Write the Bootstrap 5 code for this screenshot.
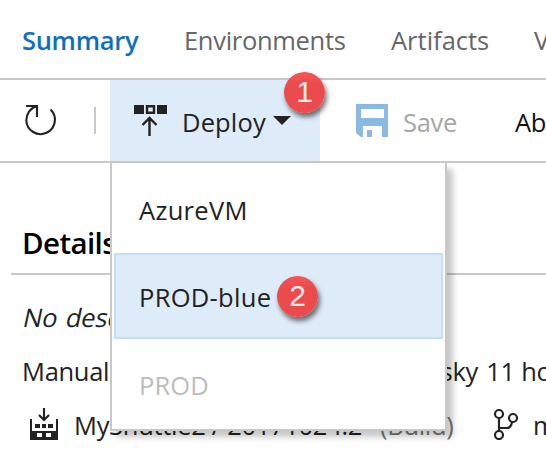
<!DOCTYPE html>
<html lang="en">
<head>
<meta charset="utf-8">
<title>Release summary</title>
<link href="https://cdn.jsdelivr.net/npm/bootstrap@5.3.0/dist/css/bootstrap.min.css" rel="stylesheet">
<style>
body{width:546px;height:457px;overflow:hidden;background:#fff;color:#222;font:25.5px/36px "Open Sans","Noto Sans",sans-serif;letter-spacing:-.3px}
svg{display:block;flex:none}
.tabs-bar{height:80px;border-bottom:2px solid #c8c8c8;padding:2px 0 0 22px;overflow:hidden}
.tabs-bar .nav-link{padding:0;color:#666;flex:none}
.tabs-bar .nav-link.active{color:#106ebe;font-weight:600}
.t-sum{width:162px}.t-env{width:207px}.t-art{width:143px;letter-spacing:0}
.tool-bar{height:83px;border-bottom:2px solid #c8c8c8}
.tool-bar > *,.build > *{flex:none}
.tool-bar .icon-refresh{margin-left:24px}
.sep{width:2px;height:27px;background:#c8c8c8;margin-left:36px}
.deploy-btn{width:210px;height:81px;background:#deebf8;margin-left:14px;padding-left:24px}
.deploy-btn .lbl{width:91px;margin-left:14px;padding-top:3px;letter-spacing:.15px}
.deploy-btn .lbl,.deploy-btn svg{flex:none}
.save-btn{margin-left:36px;color:#a6a6a6}
.save-btn .lbl{width:112px;margin-left:15px;padding-top:3px}
.abandon{color:#111;padding-top:3px}
.drop-menu{left:110px;top:83px;width:337px;height:268px;border:2px solid #c8c8c8;border-top:0;background:#fff;padding:0 2px;box-shadow:6px 6px 6px rgba(0,0,0,.22);clip-path:inset(0 -20px -20px 0);z-index:5;letter-spacing:.3px}
.menu-row{height:90px;padding:3px 0 0 25px}
.menu-row.picked{height:86px;background:#deebf8;border:2px solid #c7dff5;padding:2px 0 0 23px}
.menu-row.off{color:#bdbdbd;padding-top:1px;letter-spacing:.1px}
.step{width:41px;height:41px;border-radius:50%;background:linear-gradient(#f55555,#ec4b4d 30%,#ec4b4d);color:#f4e9ea;font:30px/40px "Liberation Sans",sans-serif;letter-spacing:0;text-align:center;box-shadow:2px 4px 5px rgba(0,0,0,.55);z-index:6}
.step-1{left:284px;top:-8px}
.step-2{left:161px;top:21px}
.details h2{font-size:29.5px;line-height:40px;font-weight:600;color:#000;letter-spacing:-.6px;margin:60px 0 0 22px}
.rule{height:2px;background:#c8c8c8;margin:10px 0 0 11px}
.desc{margin:24px 0 0 24px;width:300px;letter-spacing:-.2px;word-spacing:2px;transform:skewX(-12deg)}
.manual{margin:18px 0 0 22px}
.manual .by{width:456px}
.ago{margin-left:2px}
.build{margin:15px 0 0 30px}
.build .rel{width:306px;margin-left:16px}
.build .kind{width:113px;color:#777}
.build .rel,.build .kind,.build .branch{padding-top:3px}
.build .branch{margin-left:14px}
</style>
</head>
<body>
<nav class="nav tabs-bar d-flex flex-nowrap align-items-center text-nowrap">
  <a class="nav-link active t-sum">Summary</a><a class="nav-link t-env">Environments</a><a class="nav-link t-art">Artifacts</a><a class="nav-link">V</a>
</nav>
<div class="tool-bar position-relative d-flex align-items-center text-nowrap">
  <svg class="icon-refresh" width="34" height="34" viewBox="0 0 34 34" fill="none" stroke="#222" stroke-width="2.1"><path d="M13 2C6 4 2.300 10 2.300 16.500A14.300 14.300 0 1 0 26.500 5.500M2 2h11v11"/></svg>
  <div class="sep"></div>
  <div class="deploy-btn d-flex align-items-center">
    <svg width="34" height="34" viewBox="0 0 34 34" fill="#222"><path d="M0 1h10v9H0zM23 1h10v9H23z"/><path d="M13 2.200h7v6.600h-7zM15.500 32V14M8.500 21l7-7 7 7" fill="none" stroke="#222" stroke-width="2.4"/></svg>
    <span class="lbl">Deploy</span>
    <svg width="18" height="10" viewBox="0 0 18 10" fill="#222"><path d="M0 0h18L9 9z"/></svg>
  </div>
  <div class="save-btn d-flex align-items-center">
    <svg width="32" height="33" viewBox="0 0 32 33" fill="#8ab9e3"><path fill-rule="evenodd" d="M0 0h32v33h-6V22H7v11H5l-5-4zM5 5v9h23V5z"/><path d="M11 26h5v7h-5z"/></svg>
    <span class="lbl">Save</span>
  </div>
  <span class="abandon">Ab</span>
  <div class="step step-1 position-absolute">1</div>
  <div class="drop-menu position-absolute">
    <div class="menu-row d-flex align-items-center">AzureVM</div>
    <div class="menu-row picked d-flex align-items-center position-relative">PROD-blue
      <div class="step step-2 position-absolute">2</div>
    </div>
    <div class="menu-row off d-flex align-items-center">PROD</div>
  </div>
</div>
<main class="details text-nowrap overflow-hidden">
  <h2>Details</h2>
  <div class="rule"></div>
  <div class="desc">No description</div>
  <div class="manual d-flex"><span class="by d-flex flex-shrink-0 justify-content-between"><span>Manual</span><span>sky</span></span><span class="ago flex-shrink-0">&nbsp;11 ho</span></div>
  <div class="build d-flex align-items-center">
    <svg width="28" height="33" viewBox="0 0 28 33" fill="#222"><path d="M0 12h2v12h24V12h2v21H0zM5 17h5v4H5zM12 17h4v4h-4zM18 17h5v4h-5z"/><path fill="#fff" d="M7 26h5v4H7zM16 26h5v4h-5z"/><path d="M14 1v12M9 8l5 5 5-5" fill="none" stroke="#222" stroke-width="2.1"/></svg>
    <span class="rel">MyShuttle2 / 20171024.2</span><span class="kind">(Build)</span>
    <svg width="26" height="32" viewBox="0 0 26 32" fill="none" stroke="#222" stroke-width="2.2"><circle cx="6" cy="6" r="4"/><circle cx="20" cy="10" r="4"/><circle cx="6" cy="27" r="4"/><path d="M6 10v13M6 20h8q4 0 5-6"/></svg>
    <span class="branch">m</span>
  </div>
</main>
<script src="https://cdn.jsdelivr.net/npm/bootstrap@5.3.0/dist/js/bootstrap.bundle.min.js"></script>
</body>
</html>
